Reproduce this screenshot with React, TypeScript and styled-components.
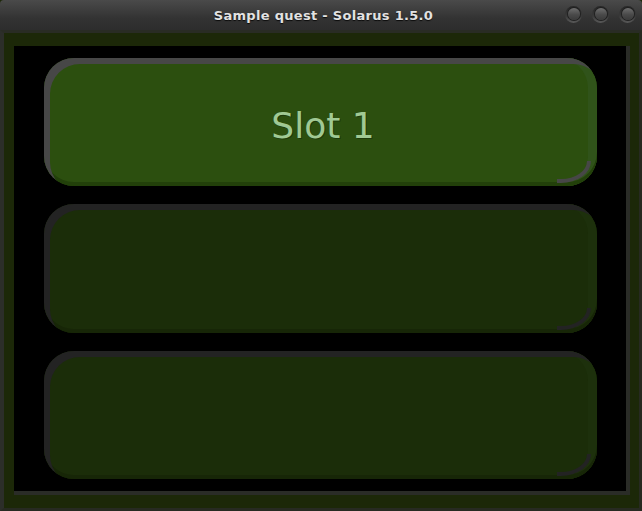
import React from "react";
import styled, { createGlobalStyle } from "styled-components";

const Global = createGlobalStyle`
  html, body { margin: 0; padding: 0; background: #000; }
  *, *::before, *::after { box-sizing: border-box; }
`;

const Window = styled.div`
  width: 642px;
  height: 511px;
  display: flex;
  flex-direction: column;
  background: #1c2808;
  overflow: hidden;
`;

const TitleBar = styled.div`
  height: 30px;
  flex: none;
  display: grid;
  grid-template-columns: 1fr auto 1fr;
  align-items: center;
  background: linear-gradient(#4a4a4a, #333333 60%, #2d2d2d);
  border-radius: 4px 4px 0 0;
`;

const Title = styled.div`
  grid-column: 2;
  padding-left: 5px;
  font-family: "DejaVu Sans", sans-serif;
  font-weight: bold;
  font-size: 13px;
  letter-spacing: 0.3px;
  color: #e2e2e2;
  text-shadow: 0 1px 1px rgba(0, 0, 0, 0.8);
  white-space: nowrap;
`;

const Controls = styled.div`
  grid-column: 3;
  justify-self: end;
  display: flex;
  gap: 10px;
  padding-right: 6px;
  margin-top: -2px;
`;

const WinButton = styled.div`
  width: 17px;
  height: 17px;
  border-radius: 50%;
  background: linear-gradient(#262626, #3a3a3a 60%, #5a5a5a);
  display: flex;
  align-items: center;
  justify-content: center;
  &::before {
    content: "";
    width: 12px;
    height: 12px;
    border-radius: 50%;
    background: linear-gradient(#6e6e6e, #4a4a4a 55%, #3a3a3a);
    box-shadow: 0 0 0 1px #202020;
  }
`;

const Frame = styled.div`
  flex: 1;
  display: flex;
  border-left: 4px solid #2c2e29;
  border-top: 3px solid #292c24;
  border-right: 3px solid #272a21;
  border-bottom: 3px solid #272a21;
  padding: 13px 9px 13px 10px;
  background: #1c2808;
`;

const Screen = styled.div`
  flex: 1;
  display: flex;
  flex-direction: column;
  gap: 18px;
  padding: 12px 29px 12px 30px;
  background: #000;
  border-right: 4px solid #2a2c27;
  border-bottom: 4px solid #2a2c27;
`;

const Slot = styled.div<{ $active?: boolean }>`
  flex: 1;
  position: relative;
  display: flex;
  align-items: center;
  justify-content: center;
  padding: 6px 0 0 5px;
  border-radius: 30px;
  background: ${(p) => (p.$active ? "#2c4f0f" : "#1b2d09")};
  box-shadow: inset 6px 6px 0 ${(p) => (p.$active ? "#474747" : "#232323")},
    inset 0 -4px 0 ${(p) => (p.$active ? "#22400a" : "#172607")},
    inset -9px 0 0 ${(p) => (p.$active ? "#30531a" : "#1d300c")};

  &::after {
    content: "";
    position: absolute;
    right: 6px;
    bottom: 3px;
    width: 34px;
    height: 22px;
    border-right: 4px solid ${(p) => (p.$active ? "#474747" : "#232323")};
    border-bottom: 4px solid ${(p) => (p.$active ? "#474747" : "#232323")};
    border-top: 0;
    border-left: 0;
    border-right-color: ${(p) => (p.$active ? "#474747" : "#232323")};
    border-bottom-right-radius: 30px 22px;
  }
`;

const SlotLabel = styled.span`
  font-family: "DejaVu Sans", sans-serif;
  font-size: 36px;
  color: #a0c994;
  text-shadow: 1px 1px 0 #1d3a0b;
  white-space: nowrap;
`;

export default function App() {
  return (
    <>
      <Global />
      <Window>
        <TitleBar>
          <Title>Sample quest - Solarus 1.5.0</Title>
          <Controls>
            <WinButton />
            <WinButton />
            <WinButton />
          </Controls>
        </TitleBar>
        <Frame>
          <Screen>
            <Slot $active>
              <SlotLabel>Slot 1</SlotLabel>
            </Slot>
            <Slot />
            <Slot />
          </Screen>
        </Frame>
      </Window>
    </>
  );
}
